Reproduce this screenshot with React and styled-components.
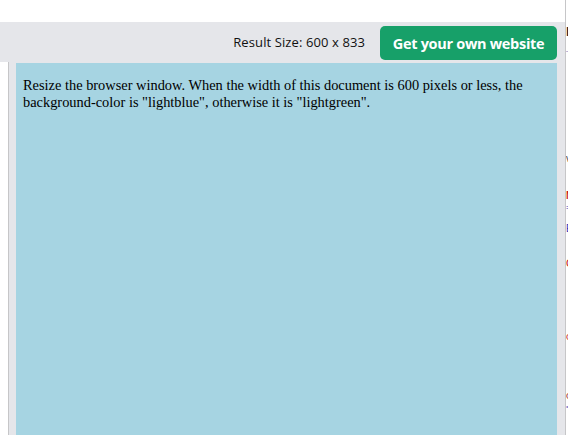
import React from 'react';
import styled, { createGlobalStyle } from 'styled-components';

const GlobalStyle = createGlobalStyle`
  html, body {
    margin: 0;
    padding: 0;
    background: #fff;
    overflow: hidden;
  }
`;

const Page = styled.div`
  width: 568px;
  height: 435px;
  display: flex;
  flex-direction: column;
  overflow: hidden;
`;

const TopStrip = styled.div`
  height: 22px;
  background: #fff;
  flex-shrink: 0;
`;

const Workspace = styled.div`
  flex: 1;
  display: flex;
  min-height: 0;
`;

const ResultPane = styled.div`
  width: 565px;
  display: flex;
  flex-direction: column;
  flex-shrink: 0;
`;

const Toolbar = styled.div`
  height: 40px;
  background: #e5e6ea;
  display: flex;
  justify-content: flex-end;
  align-items: center;
  gap: 15px;
  padding: 0 8px 0 0;
  flex-shrink: 0;
`;

const SizeLabel = styled.span`
  font-family: "Open Sans", "Liberation Sans", sans-serif;
  font-size: 13px;
  color: #111;
  letter-spacing: 0.1px;
`;

const OwnSiteButton = styled.a`
  display: flex;
  align-items: center;
  justify-content: center;
  width: 177px;
  height: 34px;
  margin-top: 2px;
  background: #17a069;
  color: #fff;
  border-radius: 5px;
  font-family: "Open Sans", "Liberation Sans", sans-serif;
  font-weight: 700;
  font-size: 14.5px;
  letter-spacing: -0.3px;
  text-decoration: none;
`;

const FrameRow = styled.div`
  flex: 1;
  display: flex;
  min-height: 0;
  padding-left: 8px;
  background: #fff;
`;

const FrameGutter = styled.div`
  flex: 1;
  display: flex;
  background: #e5e6ea;
  border-left: 1px solid #c6c6c8;
  padding: 1px 8px 0 7px;
`;

const ResultFrame = styled.div`
  flex: 1;
  background: #a6d4e2;
  padding: 14px 7px 0 7px;
  overflow: hidden;
`;

const FrameText = styled.p`
  margin: 0;
  font-family: "Liberation Serif", "Times New Roman", serif;
  font-size: 14.4px;
  line-height: 16.5px;
  color: #000;
`;

const SidePanel = styled.div`
  flex: 1;
  border-left: 1px solid #c6c6c8;
  background: #fff;
  overflow: hidden;
  margin-top: -22px;
  display: flex;
  flex-direction: column;
`;

const Fragment = styled.span`
  display: block;
  margin-top: ${p => p.$gap}px;
  color: ${p => p.$color};
  font-family: "Liberation Sans", sans-serif;
  font-size: ${p => p.$size || 11}px;
  font-weight: ${p => (p.$bold ? 700 : 400)};
  line-height: ${p => p.$size || 11}px;
  white-space: nowrap;
`;

const fragments = [
  { gap: 25, color: '#222', text: 'l', size: 13, bold: true },
  { gap: 6, color: '#7d6fb5', text: '_', size: 8 },
  { gap: 102, color: '#444', text: 'v', size: 10 },
  { gap: 27, color: '#c81d1d', text: 'M', size: 10, bold: true },
  { gap: 3, color: '#2a33b8', text: '=', size: 8 },
  { gap: 12, color: '#2a33b8', text: 'E', size: 10 },
  { gap: 24, color: '#c81d1d', text: 'O', size: 11 },
  { gap: 64, color: '#c81d1d', text: 'O', size: 9 },
  { gap: 50, color: '#9b2a2a', text: 'O', size: 9 },
  { gap: 3, color: '#2a33b8', text: '=', size: 6 },
];

export default function App() {
  return (
    <>
      <GlobalStyle />
      <Page>
        <TopStrip />
        <Workspace>
          <ResultPane>
            <Toolbar>
              <SizeLabel>Result Size: 600 x 833</SizeLabel>
              <OwnSiteButton href="#">Get your own website</OwnSiteButton>
            </Toolbar>
            <FrameRow>
              <FrameGutter>
                <ResultFrame>
                  <FrameText>
                    Resize the browser window. When the width of this document is 600 pixels or less, the
                    background-color is "lightblue", otherwise it is "lightgreen".
                  </FrameText>
                </ResultFrame>
              </FrameGutter>
            </FrameRow>
          </ResultPane>
          <SidePanel>
            {fragments.map((f, i) => (
              <Fragment key={i} $gap={f.gap} $color={f.color} $size={f.size} $bold={f.bold}>
                {f.text}
              </Fragment>
            ))}
          </SidePanel>
        </Workspace>
      </Page>
    </>
  );
}
